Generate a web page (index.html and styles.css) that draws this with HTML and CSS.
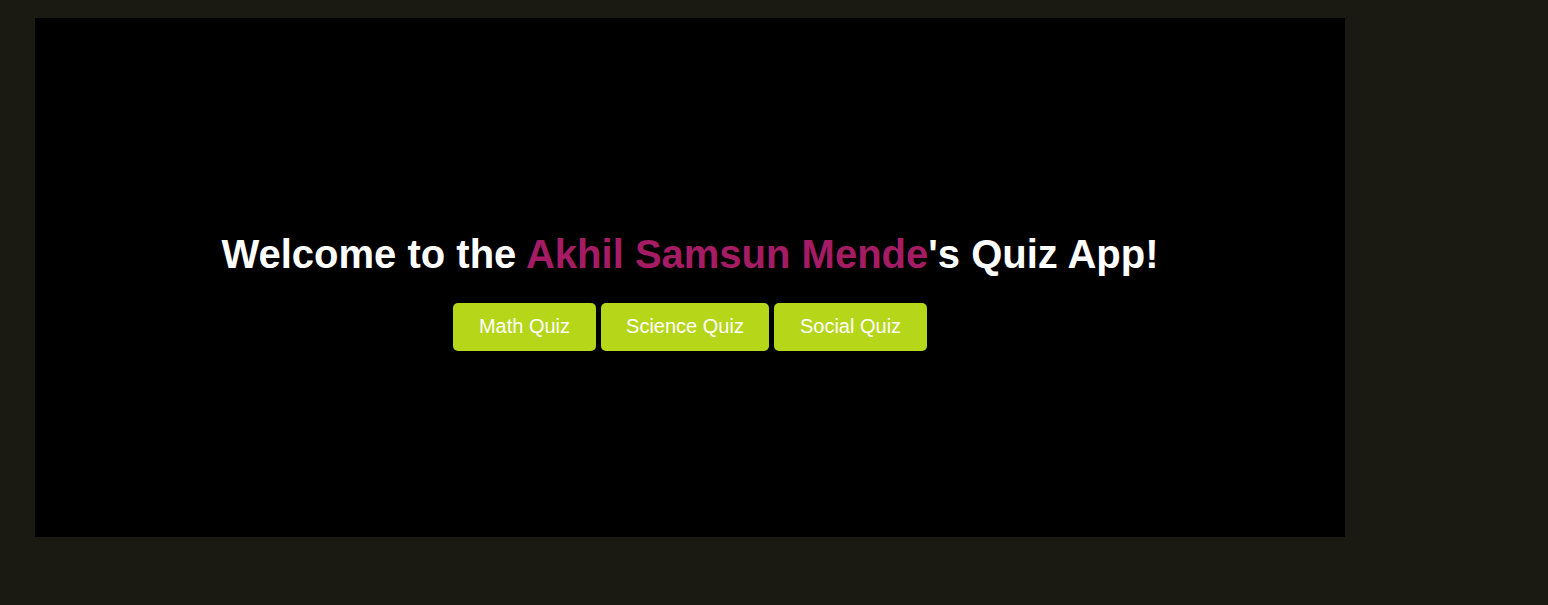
FILE: index.html
```html
<!DOCTYPE html>
<html lang="en">
<head>
<meta charset="utf-8">
<title>Quiz App</title>
<link rel="stylesheet" href="styles.css">
</head>
<body>
  <main class="stage">
    <h1 class="title">Welcome to the <span class="name">Akhil Samsun Mende</span>'s Quiz App!</h1>
    <div class="actions">
      <button class="quiz-btn" type="button">Math Quiz</button>
      <button class="quiz-btn" type="button">Science Quiz</button>
      <button class="quiz-btn" type="button">Social Quiz</button>
    </div>
  </main>
</body>
</html>
```
FILE: styles.css
```css
html, body {
  margin: 0;
  padding: 0;
}
body {
  background: #1a1912;
  font-family: "Liberation Sans", Arial, sans-serif;
  min-height: 605px;
  padding: 18px 0 0 35px;
  box-sizing: border-box;
}
.stage {
  width: 1310px;
  height: 519px;
  background: #000;
  display: flex;
  flex-direction: column;
  align-items: center;
  justify-content: center;
}
.title {
  color: #fff;
  font-size: 40px;
  font-weight: bold;
  margin: 0.67em 0;
  line-height: 46px;
}
.name {
  color: #a51c65;
}
.actions {
  display: flex;
  gap: 5px;
}
.quiz-btn {
  background: #b5d619;
  color: #fff;
  border: none;
  border-radius: 5px;
  font-family: "Liberation Sans", Arial, sans-serif;
  font-size: 20px;
  line-height: 24px;
  padding: 11px 25.5px 13px;
  cursor: pointer;
}
```
